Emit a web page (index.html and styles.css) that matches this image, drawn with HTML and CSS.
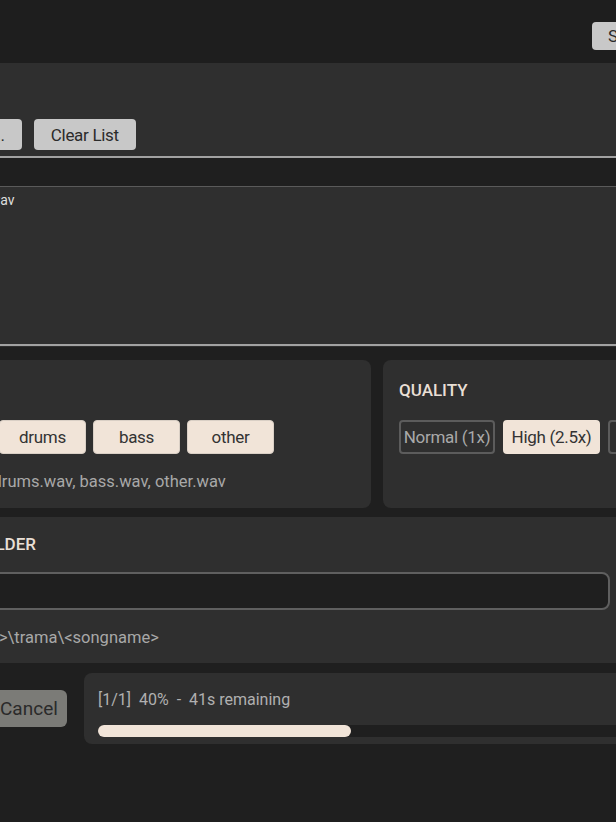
FILE: index.html
```html
<!DOCTYPE html>
<html lang="en">
  <head>
    <meta charset="UTF-8" />
    <meta name="viewport" content="width=device-width, initial-scale=1.0" />
    <title>trama</title>
    <link rel="stylesheet" href="styles.css">
  </head>
  <body>
    <div class="app">
      <header class="topbar">
        <div class="brand">trama</div>
        <div class="top-actions">
          <button type="button" class="btn">Settings</button>
          <button type="button" class="btn btn-round">?</button>
        </div>
      </header>

      <section class="files">
        <h4 class="heading">FILES</h4>
        <div class="file-actions">
          <button type="button" class="btn">Add Files...</button>
          <button type="button" class="btn">Clear List</button>
        </div>
        <div class="file-list">
          <div class="file-head"></div>
          <div class="file-body">
            <div class="file-row">demo_track.wav</div>
          </div>
        </div>
      </section>

      <div class="options">
        <section class="card">
          <h4 class="heading">STEMS</h4>
          <div class="chips">
            <button type="button" class="chip stem on">vocals</button>
            <button type="button" class="chip stem on">drums</button>
            <button type="button" class="chip stem on">bass</button>
            <button type="button" class="chip stem on">other</button>
          </div>
          <p class="hint">vocals.wav, drums.wav, bass.wav, other.wav</p>
        </section>

        <section class="card quality">
          <h4 class="heading">QUALITY</h4>
          <div class="chips">
            <button type="button" class="chip">Normal (1x)</button>
            <button type="button" class="chip on">High (2.5x)</button>
            <button type="button" class="chip">Ultra (5x)</button>
          </div>
        </section>
      </div>

      <section class="card output">
        <h4 class="heading">OUTPUT FOLDER</h4>
        <div class="folder-row">
          <input type="text" class="folder" title="folder" />
          <button type="button" class="btn btn-browse">Browse...</button>
        </div>
        <p class="hint">Path &lt;output&gt;\trama\&lt;songname&gt;</p>
      </section>

      <div class="run-row">
        <button type="button" class="btn btn-run">Separate</button>
        <button type="button" class="btn btn-cancel">Cancel</button>
        <div class="card progress">
          <div class="progress-text">[1/1]  40%  -  41s remaining</div>
          <div class="track">
            <div class="fill" style="width: 40%"></div>
          </div>
        </div>
      </div>
    </div>
  </body>
</html>
```

FILE: styles.css
```css
* {
  margin: 0;
  padding: 0;
  box-sizing: border-box;
}

body {
  background-color: #1f1f1f;
  font-family: Roboto, "Liberation Sans", sans-serif;
  overflow: hidden;
}

.app {
  width: 855px;
  margin-left: -111px;
}

.topbar {
  height: 63px;
  background-color: #1e1e1e;
  padding: 9px 16px 0;
  display: flex;
  justify-content: space-between;
  align-items: center;
}
.brand {
  color: #e9dfd5;
  font-size: 20px;
  font-weight: 700;
}
.top-actions {
  display: flex;
  gap: 8px;
  margin-right: 2px;
}
.top-actions .btn {
  letter-spacing: 0;
}

.btn {
  height: 28px;
  padding: 0 16px;
  background-color: #c8c8c8;
  color: #2b2b2b;
  border: none;
  border-radius: 4px;
  font-family: inherit;
  font-size: 17px;
  letter-spacing: -0.3px;
  white-space: nowrap;
}
.btn-round {
  width: 32px;
  padding: 0;
}

.heading {
  color: #e9dfd5;
  font-size: 17px;
  font-weight: 500;
  line-height: 20px;
}

.files {
  background-color: #2f2f2f;
  padding: 18px 16px 1px;
}
.file-actions {
  display: flex;
  gap: 12px;
  margin-top: 18px;
  margin-bottom: 6px;
  padding-left: 3px;
}
.file-actions .btn {
  height: 31px;
  padding: 0 17px;
}
.file-list {
  border-top: 2px solid #a2a2a2;
  border-bottom: 2px solid #a2a2a2;
}
.file-head {
  height: 29px;
  background-color: #1f1f1f;
  border-bottom: 1px solid #5a5a5a;
}
.file-body {
  height: 157px;
}
.file-row {
  color: #dedede;
  font-size: 14px;
  padding: 5px 8px;
  line-height: 17px;
}

.options {
  display: grid;
  grid-template-columns: 482px 1fr;
  gap: 12px;
  margin-top: 13px;
}

.card {
  background-color: #2f2f2f;
  border-radius: 8px;
  padding: 20px 16px 16px;
}

.chips {
  display: flex;
  gap: 8px;
  margin-top: 20px;
}
.chip {
  height: 34px;
  padding: 0 4px;
  background-color: transparent;
  color: #a9a9a9;
  border: 2px solid #5c5c5c;
  border-radius: 4px;
  font-family: inherit;
  font-size: 17px;
  letter-spacing: -0.3px;
  white-space: nowrap;
}
.chip.on {
  background-color: #f1e4d8;
  border-color: #f1e4d8;
  color: #333;
}
.chip.stem {
  width: 87px;
  border-width: 1px;
  border-color: #d9cfc5;
}
.chips .stem + .stem {
  margin-left: -1px;
}
.quality .chip {
  width: 97px;
  padding: 0;
}
.quality .chip:first-child {
  width: 96px;
}

.hint {
  margin-top: 18px;
  color: #a8a8a8;
  font-size: 16.5px;
  line-height: 20px;
}

.output {
  margin-top: 9px;
  padding: 17px 16px 15px;
}
.folder-row {
  display: flex;
  gap: 8px;
  margin-top: 18px;
}
.folder {
  flex: 1;
  height: 38px;
  background-color: #1f1f1f;
  border: 2px solid #5f5f5f;
  border-radius: 8px;
}
.btn-browse {
  width: 110px;
  height: 38px;
}
.output .hint {
  margin-top: 18px;
}

.run-row {
  display: flex;
  align-items: center;
  margin-top: 10px;
}
.btn-run,
.btn-cancel {
  height: 37px;
  padding: 0 15px;
  border-radius: 6px;
  font-size: 19px;
  letter-spacing: 0;
}
.btn-run {
  width: 88px;
  margin-right: 8px;
}
.btn-cancel {
  width: 82px;
  background-color: #7b7b77;
  color: #2a2a2a;
  margin-right: 17px;
}
.progress {
  flex: 1;
  padding: 17px 14px 7px;
}
.progress-text {
  color: #b0b0b0;
  font-size: 16px;
  line-height: 20px;
  white-space: pre;
}
.track {
  height: 12px;
  margin-top: 15px;
  background-color: #1f1f1f;
  border-radius: 6px;
}
.fill {
  height: 100%;
  background-color: #f1e4d8;
  border-radius: 6px;
}
```
